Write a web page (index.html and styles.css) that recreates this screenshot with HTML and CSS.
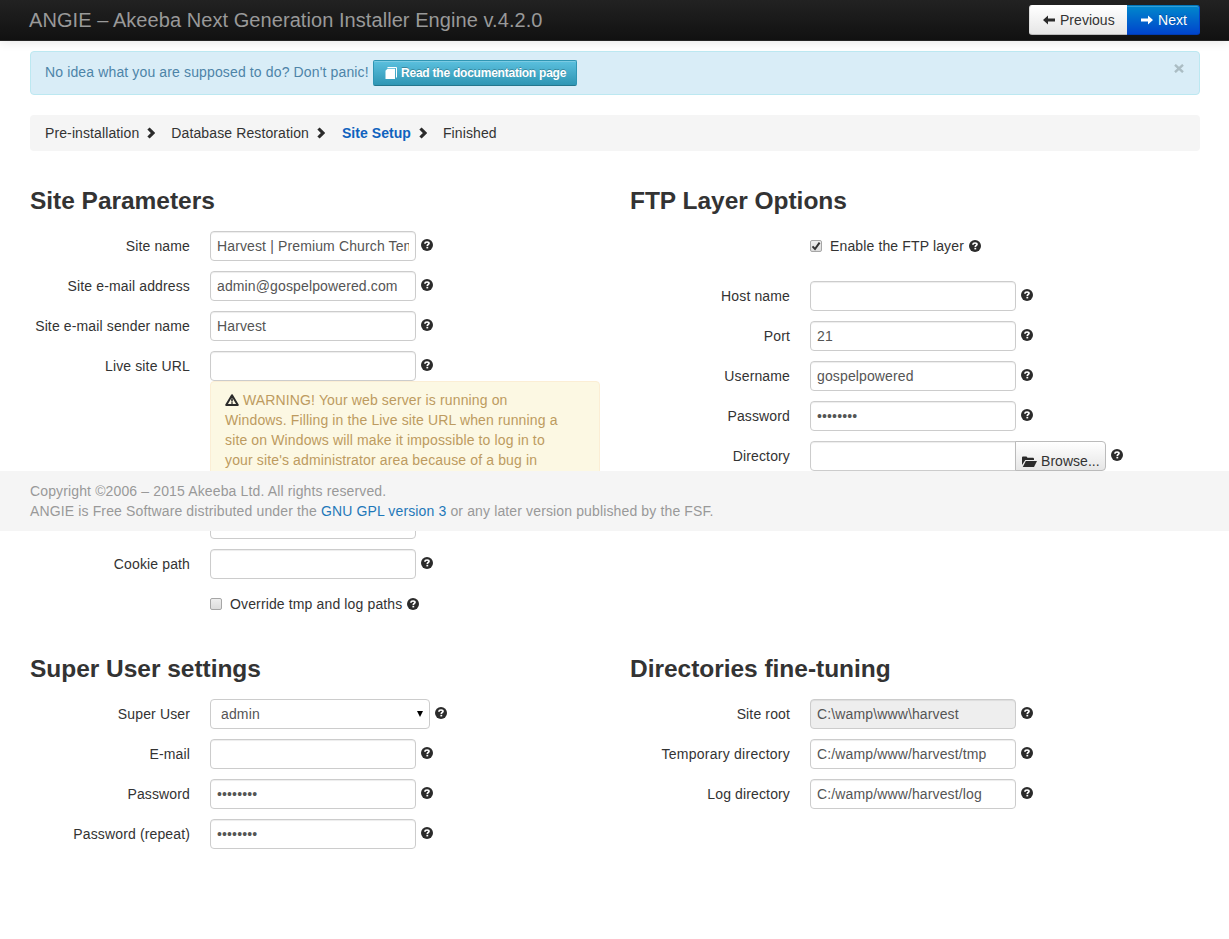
FILE: index.html
```html
<!DOCTYPE html>
<html lang="en">
<head>
<meta charset="utf-8">
<title>ANGIE – Akeeba Next Generation Installer Engine v.4.2.0</title>
<link rel="stylesheet" href="styles.css">
</head>
<body>
<svg class="sprite" width="0" height="0">
  <symbol id="help" viewBox="0 0 12 12"><circle cx="6" cy="6" r="6" fill="#2b2b2b"/><path d="M3.900 4.700C4 3.400 4.900 3 6.100 3c1.200 0 1.900.5 1.900 1.300C8 5.400 6.300 5.500 6.300 7" fill="none" stroke="#fff" stroke-width="1.700"/><path d="M5.400 7.800h1.800v1.600H5.400z" fill="#fff"/></symbol>
  <symbol id="chevron" viewBox="0 0 8 12"><path d="M1.500 1.500L5.900 6L1.500 10.500" fill="none" stroke="#2b2b2b" stroke-width="3.200"/></symbol>
</svg>
<header class="navbar">
  <div class="brand">ANGIE – Akeeba Next Generation Installer Engine v.4.2.0</div>
  <div class="btn-group">
    <a class="btn btn-prev"><svg width="12" height="10" viewBox="0 0 12 10"><path d="M0 5L5 .5V3.600H12V6.400H5V9.500z" fill="#2b2b2b"/></svg><span class="prev-text">Previous</span></a>
    <a class="btn btn-next"><svg width="12" height="10" viewBox="0 0 12 10"><path d="M12 5L7 .5V3.600H0V6.400H7V9.500z" fill="#fff"/></svg><span class="next-text">Next</span></a>
  </div>
</header>
<main class="container">
  <div class="alert-info">
    <span class="info-text">No idea what you are supposed to do? Don't panic!</span>
    <a class="btn-doc"><svg width="12" height="12" viewBox="0 0 12 12"><path d="M2.500 .5H11.500V10.500" fill="none" stroke="#fff"/><path d="M2.500 1.800H10V12H.5V3.800z" fill="#fff"/></svg><span class="doc-text">Read the documentation page</span></a>
    <span class="close"><svg width="10" height="9" viewBox="0 0 10 9"><path d="M1 .8L9 8.200M9 .8L1 8.200" stroke="#abbdc4" stroke-width="2.400"/></svg></span>
  </div>
  <ul class="breadcrumb">
    <li><span>Pre-installation</span><svg width="8" height="12"><use href="#chevron"/></svg></li>
    <li><span>Database Restoration</span><svg width="8" height="12"><use href="#chevron"/></svg></li>
    <li class="active"><span>Site Setup</span><svg width="8" height="12"><use href="#chevron"/></svg></li>
    <li><span>Finished</span></li>
  </ul>
  <div class="row top-row">
    <section class="column">
      <h3>Site Parameters</h3>
      <div class="group"><label>Site name</label><input type="text" value="Harvest | Premium Church Template"><svg class="help"><use href="#help"/></svg></div>
      <div class="group"><label>Site e-mail address</label><input type="text" value="admin@gospelpowered.com"><svg class="help"><use href="#help"/></svg></div>
      <div class="group"><label>Site e-mail sender name</label><input type="text" value="Harvest"><svg class="help"><use href="#help"/></svg></div>
      <div class="group flush"><label>Live site URL</label><input type="text"><svg class="help"><use href="#help"/></svg></div>
      <div class="alert-warning"><svg width="14" height="12" viewBox="0 0 14 12"><path d="M7 1.200L12.800 11H1.200z" fill="none" stroke="#2b2b2b" stroke-width="2" stroke-linejoin="round"/><path d="M6.200 4.200h1.600v3.300H6.200zM6.200 8.200h1.600v1.500H6.200z" fill="#2b2b2b"/></svg> WARNING! Your web server is running on<br>Windows. Filling in the Live site URL when running a<br>site on Windows will make it impossible to log in to<br>your site's administrator area because of a bug in</div>
      <div class="group"><label></label><input type="text"></div>
      <div class="group"><label>Cookie path</label><input type="text"><svg class="help"><use href="#help"/></svg></div>
      <div class="check-group"><span class="checkbox"></span><span>Override tmp and log paths</span><svg class="help"><use href="#help"/></svg></div>
    </section>
    <section class="column">
      <h3>FTP Layer Options</h3>
      <div class="check-group"><span class="checkbox"><svg width="10" height="10" viewBox="0 0 10 10"><path d="M1.500 5.400L4 8L8.600 1.600" fill="none" stroke="#333" stroke-width="2"/></svg></span><span>Enable the FTP layer</span><svg class="help"><use href="#help"/></svg></div>
      <div class="group"><label>Host name</label><input type="text"><svg class="help"><use href="#help"/></svg></div>
      <div class="group"><label>Port</label><input type="text" value="21"><svg class="help"><use href="#help"/></svg></div>
      <div class="group"><label>Username</label><input type="text" value="gospelpowered"><svg class="help"><use href="#help"/></svg></div>
      <div class="group"><label>Password</label><input type="password" value="password"><svg class="help"><use href="#help"/></svg></div>
      <div class="group"><label>Directory</label><input class="joined" type="text"><a class="browse"><svg width="15" height="11" viewBox="0 0 15 11"><path d="M0 9V1.500Q0 .5 1 .5H4.500L5.500 1.800H11Q12 1.800 12 3V4H3.300z" fill="#2b2b2b"/><path d="M3.800 5H15L12 11H.8z" fill="#2b2b2b"/></svg><span>Browse...</span></a><svg class="help"><use href="#help"/></svg></div>
    </section>
  </div>
  <div class="row">
    <section class="column">
      <h3>Super User settings</h3>
      <div class="group"><label>Super User</label><div class="select"><span>admin</span><svg width="6" height="6" viewBox="0 0 6 6"><path d="M0 0H6L3 6z" fill="#000"/></svg></div><svg class="help"><use href="#help"/></svg></div>
      <div class="group"><label>E-mail</label><input type="text"><svg class="help"><use href="#help"/></svg></div>
      <div class="group"><label>Password</label><input type="password" value="password"><svg class="help"><use href="#help"/></svg></div>
      <div class="group"><label>Password (repeat)</label><input type="password" value="password"><svg class="help"><use href="#help"/></svg></div>
    </section>
    <section class="column">
      <h3>Directories fine-tuning</h3>
      <div class="group"><label>Site root</label><input type="text" value="C:\wamp\www\harvest" disabled><svg class="help"><use href="#help"/></svg></div>
      <div class="group"><label class="wide">Temporary directory</label><input type="text" value="C:/wamp/www/harvest/tmp"><svg class="help"><use href="#help"/></svg></div>
      <div class="group"><label>Log directory</label><input type="text" value="C:/wamp/www/harvest/log"><svg class="help"><use href="#help"/></svg></div>
    </section>
  </div>
</main>
<footer class="footer">
  <div>Copyright ©2006 – 2015 Akeeba Ltd. All rights reserved.</div>
  <div>ANGIE is Free Software distributed under the <a>GNU GPL version 3</a> or any later version published by the FSF.</div>
</footer>
</body>
</html>
```
FILE: styles.css
```css
* { box-sizing: border-box; }
html, body { height: 100%; overflow: hidden; }
body { margin: 0; background: #fff; color: #333; font: 14px/20px "Liberation Sans", Arial, sans-serif; letter-spacing: .135px; }
svg { flex: none; display: block; }
.sprite { position: absolute; }

.navbar { display: flex; justify-content: space-between; height: 41px; padding: 5px 29px 0 29px; background: linear-gradient(#222, #111); border-bottom: 1px solid #252525; box-shadow: 0 1px 10px rgba(0,0,0,.1); }
.brand { font-size: 20px; line-height: 30px; letter-spacing: .065px; color: #999; white-space: nowrap; }
.btn-group { display: flex; height: 30px; letter-spacing: .03px; }
.btn { display: flex; align-items: center; gap: 5px; white-space: nowrap; border: 1px solid; }
.btn-prev { width: 98px; padding-left: 13px; border-color: #fff #e6e6e6 #bbb #ddd; border-right: 0; border-radius: 3px 0 0 3px; background: linear-gradient(#fff, #e6e6e6); }
.btn-next { width: 73px; padding-left: 14px; color: #fff; border-color: #0077bb #0044cc #003bb0; border-left: 0; border-radius: 0 3px 3px 0; background: linear-gradient(#0088cc, #0044cc); text-shadow: 0 -1px 0 rgba(0,0,0,.25); box-shadow: inset 0 1px 0 rgba(255,255,255,.2); }

.container { padding: 10px 29px 0 30px; }
.alert-info { display: flex; align-items: flex-start; height: 44px; padding: 8px 14px; border: 1px solid #bce8f1; border-radius: 4px; background: #d9edf7; color: #4d84a8; white-space: nowrap; }
.info-text { width: 324px; margin: 2px 4px 0 0; }
.btn-doc { display: flex; align-items: center; gap: 4px; width: 204px; height: 26px; padding-left: 11px; border: 1px solid #2f96b4; border-bottom-color: #24768d; border-radius: 2px; background: linear-gradient(#5bc0de, #2f96b4); box-shadow: inset 0 1px 0 rgba(255,255,255,.2); color: #fff; font-size: 12px; font-weight: bold; letter-spacing: -.23px; text-shadow: 0 -1px 0 rgba(0,0,0,.25); }
.close { margin: 4px 1px 0 auto; }
.breadcrumb { display: flex; height: 36px; margin: 20px 0; padding: 8px 15px; list-style: none; border-radius: 4px; background: #f5f5f5; white-space: nowrap; }
.breadcrumb li { display: flex; align-items: center; gap: 8px; margin-right: 16px; letter-spacing: .11px; }
.breadcrumb .active { margin-left: 1px; color: #0f62be; font-weight: bold; letter-spacing: .05px; }

.row { display: flex; gap: 30px; }
.top-row { height: 468px; }
.column { width: 570px; flex: none; }
h3 { margin: 10px 0; font-size: 24.5px; line-height: 40px; letter-spacing: -.03px; white-space: nowrap; }
.group { display: flex; height: 30px; margin-bottom: 10px; }
.group.flush { margin-bottom: 0; }
label { width: 160px; margin-right: 20px; padding-top: 5px; text-align: right; white-space: nowrap; }
label.wide { letter-spacing: .25px; }
input { width: 206px; height: 30px; margin: 0; padding: 4px 6px; border: 1px solid #ccc; border-radius: 4px; background: #fff; box-shadow: inset 0 1px 1px rgba(0,0,0,.075); color: #555; font: 14px/20px "Liberation Sans", Arial, sans-serif; letter-spacing: .13px; outline: 0; }
input:disabled { background: #eee; }
.joined { border-radius: 4px 0 0 4px; }
.help { width: 12px; height: 12px; margin: 8px 0 0 5px; }
.browse { display: flex; gap: 4px; width: 91px; height: 30px; margin-left: -1px; padding: 9px 0 0 6px; overflow: hidden; border: 1px solid #bbb; border-radius: 0 4px 4px 0; background: linear-gradient(#fff, #e6e6e6); letter-spacing: .04px; }
.browse svg { margin-top: 5px; }
.select { display: flex; align-items: center; justify-content: space-between; width: 220px; height: 30px; padding: 0 6px 0 10px; border: 1px solid #ccc; border-radius: 4px; color: #555; }
.alert-warning { width: 390px; height: 118px; margin: 0 0 10px 180px; padding: 8px 14px; border: 1px solid #fbeed5; border-radius: 4px; background: #fcf8e3; color: #bd9b60; white-space: nowrap; }
.alert-warning svg { display: inline-block; vertical-align: -1px; }
.check-group { display: flex; height: 30px; margin: 0 0 20px 180px; padding-top: 5px; white-space: nowrap; }
.checkbox { width: 12px; height: 12px; margin: 4px 8px 0 0; border: 1px solid #a6a6a6; border-radius: 2px; background: linear-gradient(#eee, #dcdcdc); }
.check-group .help { margin-top: 4px; }

.footer { position: absolute; top: 471px; left: 0; width: 100%; height: 60px; padding: 10px 30px; background: #f5f5f5; color: #999; white-space: nowrap; }
.footer a { color: #1f78b9; }
```
